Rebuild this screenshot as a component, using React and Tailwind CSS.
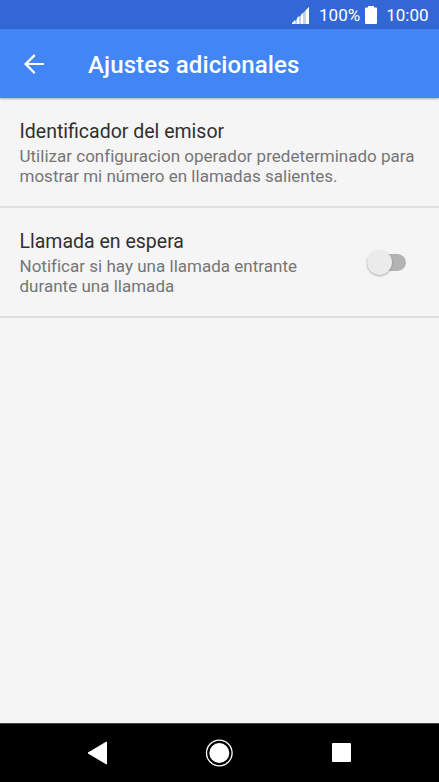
import React from 'react';

const settings = [
  {
    title: "Identificador del emisor",
    lines: ["Utilizar configuracion operador predeterminado para", "mostrar mi número en llamadas salientes."],
  },
  {
    title: "Llamada en espera",
    lines: ["Notificar si hay una llamada entrante", "durante una llamada"],
    toggle: true,
  },
];

const StatusBar = () => {
  return (
    <div className="flex h-[29px] items-center justify-end bg-[#3367d6] pt-px pr-[10.500px] text-[17px] text-white">
      <svg width="17" height="17" viewBox="0 0 17 17" fill="currentColor">
        <path d="M0 17L17 0v17z" fillOpacity="0.7" />
        <path d="M0 17v-1l3-3v4zM5 17v-6l2-2v8zM9 17V8l2-2v11zM14 17V3l3-3v17z" />
      </svg>
      <span className="ml-[10px] pt-[2px]">100%</span>
      <svg className="ml-[5px]" width="12" height="18" viewBox="0 0 12 18" fill="currentColor">
        <path d="M3 0h6v1.500h2a1 1 0 0 1 1 1V17a1 1 0 0 1-1 1H1a1 1 0 0 1-1-1V2.500a1 1 0 0 1 1-1h2z" />
      </svg>
      <span className="ml-[9px] pt-[2px]">10:00</span>
    </div>
  )
}

const Toggle = () => {
  return (
    <div className="mr-[33px] flex h-[17px] w-[39px] items-center rounded-full bg-[#b3b3b3]">
      <div className="size-[25px] shrink-0 rounded-full bg-[#ebebeb] shadow-[0_1px_2px_rgba(0,0,0,0.3)]" />
    </div>
  )
}

const App = () => {
  return (
    <div className="flex h-screen flex-col overflow-hidden bg-[#f5f5f5] font-['Roboto',sans-serif]">
      <StatusBar />
      <header className="z-10 flex h-[69px] items-center bg-[#4285f4] pl-[24px] text-white shadow-[0_1px_2px_rgba(0,0,0,0.3)]">
        <svg width="20" height="20" viewBox="4 4 16 16" fill="currentColor">
          <path d="M20 11.200H7.500l5.700-5.700L12 4l-8 8 8 8 1.200-1.200L7.500 12.800H20z" />
        </svg>
        <h1 className="ml-[44px] pt-[2px] text-[24px] font-medium tracking-[0.12px]">Ajustes adicionales</h1>
      </header>
      <main className="flex-1">
        {settings.map((item, index) => {
          return (
            <div className="flex h-[110px] items-center justify-between border-b-2 border-[#e0e0e0] pl-[19.500px]" key={index}>
              <div className="whitespace-nowrap">
                <h2 className="mb-[2px] text-[19.500px] leading-[25px] text-[#303030]">{item.title}</h2>
                {item.lines.map((line) => (
                  <p className="text-[17px] leading-[20px] tracking-[0.01px] text-[#757575]" key={line}>{line}</p>
                ))}
              </div>
              {item.toggle && <Toggle />}
            </div>
          )
        })}
      </main>
      <nav className="flex h-[59px] items-center border-t border-[#444444] bg-black pb-px pl-[87px] text-white">
        <svg width="20" height="24" viewBox="0 0 20 24" fill="currentColor" stroke="currentColor" strokeLinejoin="round">
          <path d="M19.500 1v22L1 12z" />
        </svg>
        <svg className="ml-[98px]" width="28" height="28" viewBox="0 0 28 28" fill="currentColor">
          <circle cx="14.300" cy="14" r="12.800" fill="none" stroke="currentColor" strokeWidth="1.300" />
          <circle cx="14.300" cy="14" r="10" />
        </svg>
        <div className="ml-[99px] size-[19px] rounded-[1px] bg-white" />
      </nav>
    </div>
  )
}

export default App
